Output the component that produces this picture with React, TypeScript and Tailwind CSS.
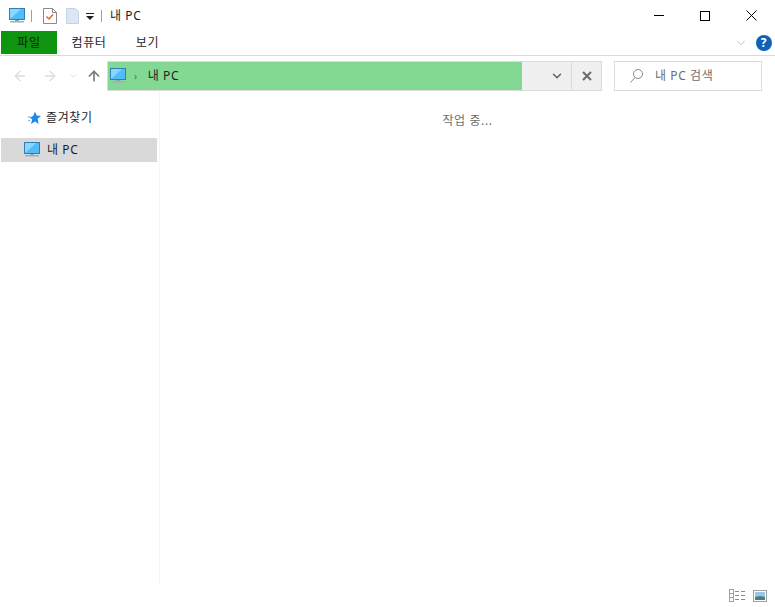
import { ArrowLeft, ArrowRight, ArrowUp, ChevronDown } from "lucide-react";

function PcIcon() {
  return (
    <svg width="18" height="16" viewBox="0 0 18 16" className="shrink-0">
      <rect x="1.5" y="0.5" width="15" height="11" fill="#38a6f2" stroke="#2f7eaf" />
      <path d="M2 1h14v10H2z" fill="#52bcfa" />
      <path d="M2 11V1h11z" fill="#8bd6ff" />
      <rect x="7" y="12" width="4" height="1" fill="#8fa3b2" />
      <rect x="2" y="13" width="14" height="1.5" fill="#9fb0bd" />
    </svg>
  );
}

export default function App() {
  return (
    <div className="w-[775px] h-[607px] bg-white flex flex-col overflow-hidden text-[12px] tracking-[0.6px] text-[#1e1e1e] font-['Noto_Sans','Noto_Sans_CJK_KR',sans-serif]">
      {/* title bar */}
      <div className="h-[31px] flex items-center shrink-0">
        <div className="flex items-center pl-[8px] flex-1">
          <PcIcon />
          <div className="w-px h-[12px] bg-[#a0a0a0] ml-[5px]" />
          <svg width="14" height="16" viewBox="0 0 14 16" className="ml-[11px]">
            <path d="M.5.5h9l4 4v11H.5z" fill="#fff" stroke="#8a8a8a" />
            <path d="M9.5.5v4h4" fill="none" stroke="#8a8a8a" />
            <path d="M3.5 8.5l2.5 2.5 4-4.5" fill="none" stroke="#e8632c" strokeWidth="1.5" />
          </svg>
          <svg width="13" height="16" viewBox="0 0 13 16" className="ml-[9px]">
            <path d="M.5.5h9l3 3v12H.5z" fill="#dce6f4" stroke="#c6d2e4" />
          </svg>
          <svg width="9" height="8" viewBox="0 0 9 8" className="ml-[7px] mt-[3px]">
            <rect x="0" y="0" width="8" height="1" fill="#222" />
            <path d="M0 3h8L4 7z" fill="#222" />
          </svg>
          <div className="w-px h-[12px] bg-[#a0a0a0] ml-[6px]" />
          <span className="ml-[8px]">내 PC</span>
        </div>
        <div className="flex items-center pr-px">
          <div className="w-[46px] flex justify-center">
            <div className="w-[10px] h-px bg-black" />
          </div>
          <div className="w-[46px] flex justify-center">
            <div className="w-[10px] h-[10px] border border-black" />
          </div>
          <div className="w-[46px] flex justify-center">
            <svg width="11" height="11" viewBox="0 0 11 11">
              <path d="M.5.5l10 10M10.5.5l-10 10" stroke="#000" fill="none" />
            </svg>
          </div>
        </div>
      </div>

      {/* ribbon tabs */}
      <div className="h-[25px] flex shrink-0 border-b border-[#dadada] pl-px">
        <div className="w-[56px] h-[23px] bg-[#0f940f] flex items-center justify-center text-[#0a1c0a]">파일</div>
        <div className="w-[64px] flex items-center justify-center h-[23px]">컴퓨터</div>
        <div className="w-[53px] flex items-center justify-center h-[23px]">보기</div>
        <div className="flex-1 flex justify-end items-center h-[23px] pr-[3px]">
          <ChevronDown size={14} strokeWidth={1.2} className="text-[#a8a8a8] mr-[8px]" />
          <div className="w-[16px] h-[16px] rounded-full bg-[#0f62b8] text-white font-bold text-[12px] flex items-center justify-center">?</div>
        </div>
      </div>

      {/* nav row */}
      <div className="h-[35px] flex items-start pt-[5px] shrink-0">
        <div className="w-[107px] h-[30px] flex items-center pl-[12px]">
          <ArrowLeft size={16} strokeWidth={2} className="text-[#dcdcdc]" />
          <ArrowRight size={16} strokeWidth={2} className="text-[#dcdcdc] ml-[14px]" />
          <ChevronDown size={10} strokeWidth={2} className="text-[#dcdcdc] ml-[10px]" />
          <ArrowUp size={16} strokeWidth={2.5} className="text-[#7a7a7a] ml-[8px]" />
        </div>
        <div className="w-[495px] h-[30px] flex border border-[#dadada] bg-[#f0f0f0]">
          <div className="w-[414px] bg-[#83d993] flex items-center pl-px">
            <PcIcon />
            <span className="text-[#5a6a60] text-[10px] ml-[7px]">›</span>
            <span className="ml-[10px]">내 PC</span>
          </div>
          <div className="w-[50px] flex items-center justify-center border-r border-[#dadada] pl-[21px]">
            <ChevronDown size={14} strokeWidth={2.5} className="text-[#5f5f5f]" />
          </div>
          <div className="flex-1 flex items-center justify-center">
            <svg width="10" height="10" viewBox="0 0 10 10">
              <path d="M1 1l8 8M9 1l-8 8" stroke="#6b6b6b" strokeWidth="2" fill="none" />
            </svg>
          </div>
        </div>
        <div className="ml-[12px] w-[148px] h-[30px] border border-[#dadada] flex items-center pl-[15px] text-[#6d6d6d]">
          <svg width="13" height="14" viewBox="0 0 13 14" fill="none" stroke="#8a8a8a">
            <circle cx="8" cy="5" r="4.5" />
            <path d="M5 8.5L.5 13.5" />
          </svg>
          <span className="ml-[12px]">내 PC 검색</span>
        </div>
      </div>

      {/* main */}
      <div className="flex-1 flex min-h-0">
        <div className="w-[160px] shrink-0 border-r border-[#f5f5f5] pl-px pt-[15px] mb-[23px]">
          <div className="h-[24px] flex items-center pl-[26px]">
            <svg width="14" height="14" viewBox="0 0 14 14">
              <path d="M8 .5l1.6 4.1L14 5l-3.4 2.8L11.7 13 8 10.4 4 13l1.2-4.6L3 6.5l3.2-1.5z" fill="#1e88e5" />
              <path d="M0 5.5h4L3 7.5zM0 9h3.5L3 10.5z" fill="#7cc0f5" />
            </svg>
            <span className="ml-[5px]">즐겨찾기</span>
          </div>
          <div className="h-[24px] w-[156px] mt-[8px] flex items-center pl-[22px] bg-[#d9d9d9]">
            <PcIcon />
            <span className="ml-[6px]">내 PC</span>
          </div>
        </div>
        <div className="flex-1 flex flex-col">
          <div className="flex-1 flex justify-center pt-[21px] text-[#6d6d6d]">
            <span>작업 중...</span>
          </div>
          <div className="h-[23px] flex justify-end items-center pr-[8px] gap-[8px]">
            <svg width="16" height="13" viewBox="0 0 16 13">
              <rect x=".5" y=".5" width="4" height="12" fill="#fff" stroke="#a0a0a0" />
              <path d="M1 4.5h3M1 8.5h3" stroke="#a0a0a0" />
              <path d="M6 2.5h4M12 2.5h4M6 6.5h4M12 6.5h4M6 10.5h4M12 10.5h4" stroke="#8a8a8a" />
            </svg>
            <svg width="14" height="12" viewBox="0 0 14 12">
              <rect x=".5" y=".5" width="13" height="11" fill="#fff" stroke="#a0a0a0" />
              <rect x="2" y="2" width="10" height="8" fill="#9cc6e6" />
              <path d="M2 7l5-1 5 1v3H2z" fill="#4c7f7a" />
            </svg>
          </div>
        </div>
      </div>
    </div>
  );
}
